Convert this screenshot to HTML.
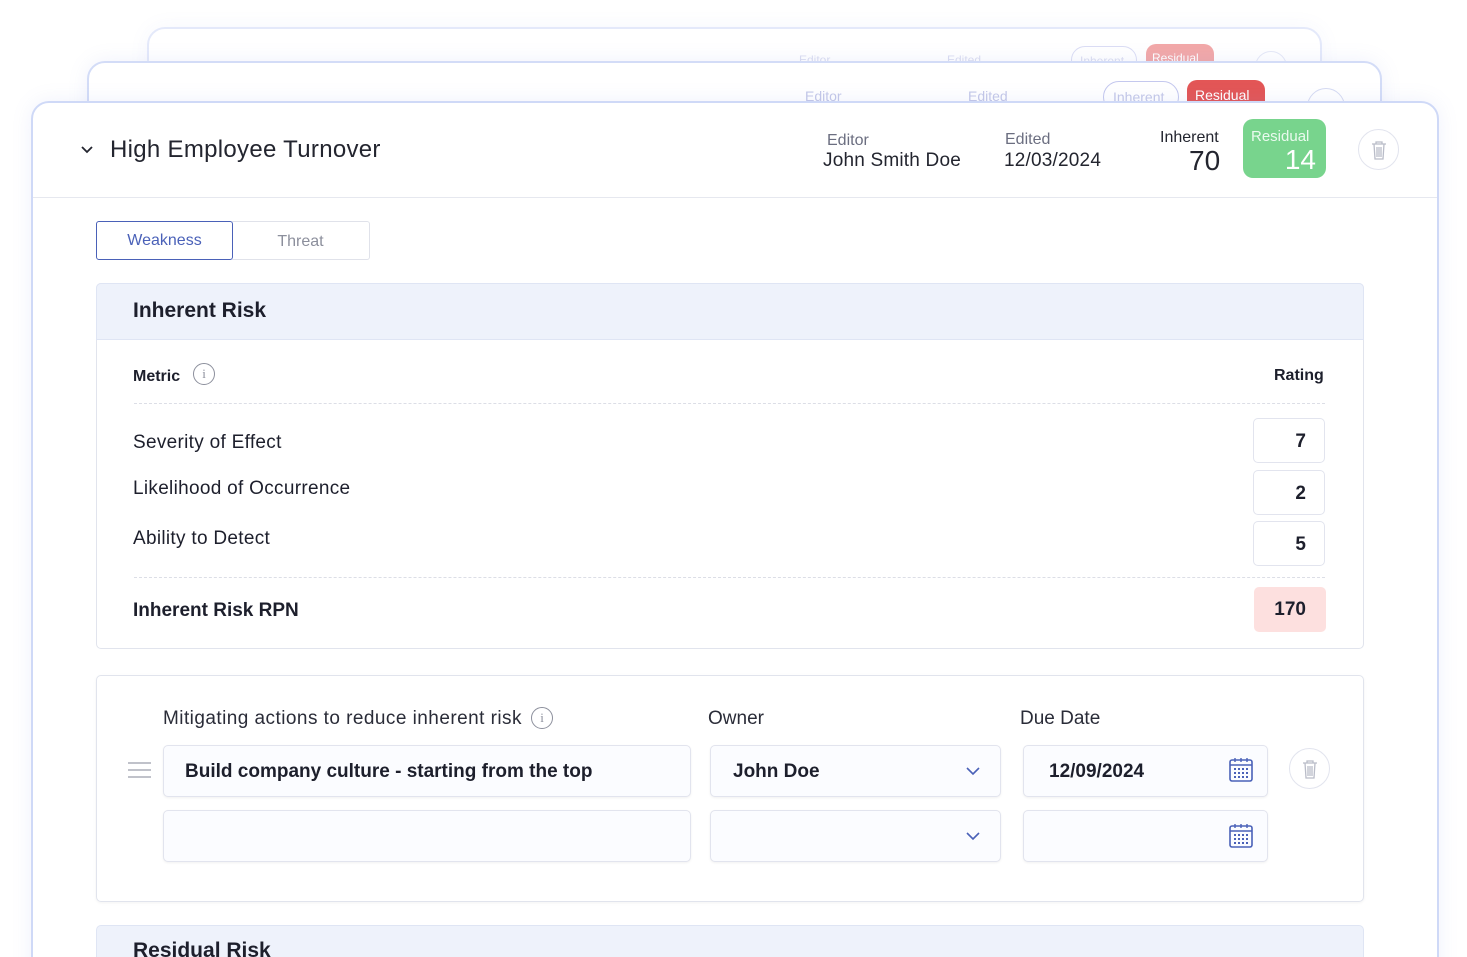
<!DOCTYPE html><html><head><style>
*{box-sizing:border-box;margin:0;padding:0}
html{width:1467px;height:957px;overflow:hidden}
body{width:1467px;height:957px;overflow:hidden;background:#fff;font-family:"Liberation Sans",sans-serif;color:#1d1f2c;position:relative}
.card{position:absolute;background:#fff;border:2px solid #d3dcf7;border-radius:18px;box-shadow:0 0 20px rgba(120,140,220,.12)}
.abs{position:absolute}
.lbl{color:#6b6e80;font-size:16px}
.val{font-size:19px;color:#23252f;letter-spacing:.2px}
.inp{position:absolute;border:1px solid #e2e4ee;border-radius:5px;background:#fbfcff;box-shadow:0 1px 2px rgba(0,0,0,.06);font-size:19px;font-weight:bold;display:flex;align-items:center}
.rate{position:absolute;left:1253px;width:72px;height:45px;border:1px solid #e2e4ee;border-radius:5px;text-align:right;padding-right:18px;line-height:45px;font-size:19px;font-weight:bold}
.dash{position:absolute;left:134px;width:1191px;border-top:1px dashed #dcdee6}
.trash{position:absolute;border:1px solid #e2e4ee;border-radius:50%;display:flex;align-items:center;justify-content:center}
</style></head><body>
<div class="card" style="left:147px;top:27px;width:1175px;height:120px;opacity:.6">
<div class="abs" style="left:650px;top:24px;font-size:12px;color:#c4c8e8">Editor</div>
<div class="abs" style="left:798px;top:24px;font-size:12px;color:#c4c8e8">Edited</div>
<div class="abs" style="left:922px;top:17px;width:66px;height:28px;border:1px solid #c4c8ee;border-radius:14px;font-size:12px;color:#c4c8e8;padding:7px 8px">Inherent</div>
<div class="abs" style="left:997px;top:15px;width:68px;height:40px;background:#ea6f6f;border-radius:10px;font-size:12px;color:#fff;padding:7px 6px">Residual</div>
<div class="abs" style="left:1106px;top:22px;width:32px;height:32px;border:1px solid #d6dbf2;border-radius:50%"></div>
</div>
<div class="card" style="left:87px;top:61px;width:1295px;height:100px">
<div class="abs" style="left:716px;top:25px;font-size:14px;color:#c4c8e8">Editor</div>
<div class="abs" style="left:879px;top:25px;font-size:14px;color:#c4c8e8">Edited</div>
<div class="abs" style="left:1014px;top:18px;width:76px;height:32px;border:1px solid #c4c8ee;border-radius:16px;font-size:14px;color:#c4c8e8;padding:7px 9px">Inherent</div>
<div class="abs" style="left:1098px;top:17px;width:78px;height:40px;background:#e35656;border-radius:10px;font-size:14px;color:#fff;padding:7px 8px">Residual</div>
<div class="abs" style="left:1218px;top:25px;width:38px;height:38px;border:1px solid #d6dbf2;border-radius:50%"></div>
</div>
<div class="card" style="left:31px;top:101px;width:1408px;height:900px;border-color:#cfd9f7">
<div class="abs" style="left:0;top:94px;width:1404px;border-top:1px solid #e6e8ef"></div>
</div>
<svg class="abs" style="left:80px;top:144px" width="14" height="12"><path d="M2 3l5 5 5-5" fill="none" stroke="#23252f" stroke-width="1.8"/></svg>
<div class="abs" style="left:110px;top:136px;font-size:24px;letter-spacing:.3px;color:#23252f">High Employee Turnover</div>
<div class="abs lbl" style="left:827px;top:132px">Editor</div>
<div class="abs val" style="left:823px;top:150px">John Smith Doe</div>
<div class="abs lbl" style="left:1005px;top:131px">Edited</div>
<div class="abs val" style="left:1004px;top:150px">12/03/2024</div>
<div class="abs" style="left:1160px;top:129px;font-size:16px;color:#23252f">Inherent</div>
<div class="abs" style="left:1189px;top:145px;font-size:28px;color:#23252f">70</div>
<div class="abs" style="left:1243px;top:119px;width:83px;height:59px;background:#78d48d;border-radius:10px;color:#fff">
<div class="abs" style="left:8px;top:9px;font-size:15px;color:#eafaee">Residual</div><div class="abs" style="right:10px;top:25px;font-size:28px">14</div></div>
<div class="trash" style="left:1358px;top:129px;width:41px;height:41px"><svg width="20" height="22"><path d="M3 5h14M7 5V3h6v2M5 5l1 15h8l1-15M8 8v10M10 8v10M12 8v10" fill="none" stroke="#b9bcc8" stroke-width="1.3"/></svg></div>

<div class="abs" style="left:96px;top:221px;width:137px;height:39px;border:1.5px solid #4a61b8;border-radius:3px;color:#4a61b8;font-size:16px;text-align:center;line-height:38px">Weakness</div>
<div class="abs" style="left:232px;top:221px;width:138px;height:39px;border:1px solid #e0e2ea;border-left:none;border-radius:0 3px 3px 0;color:#8c8f9c;font-size:16px;text-align:center;line-height:39px">Threat</div>

<div class="abs" style="left:96px;top:283px;width:1268px;height:366px;border:1px solid #e1e4ed;border-radius:5px"></div>
<div class="abs" style="left:96px;top:283px;width:1268px;height:57px;background:#eef2fb;border:1px solid #dfe5f4;border-radius:5px 5px 0 0"></div>
<div class="abs" style="left:133px;top:299px;font-size:21px;font-weight:bold">Inherent Risk</div>
<div class="abs" style="left:133px;top:368px;font-size:16px;font-weight:bold">Metric</div>
<div class="abs" style="left:193px;top:363px;width:22px;height:22px;border:1.3px solid #8c8f9c;border-radius:50%;font-size:13px;color:#8c8f9c;text-align:center;line-height:20px;font-family:'Liberation Serif',serif">i</div>
<div class="abs" style="left:1274px;top:367px;font-size:16px;font-weight:bold">Rating</div>
<div class="dash" style="top:403px"></div>
<div class="abs" style="left:133px;top:432px;font-size:19px;letter-spacing:.3px">Severity of Effect</div>
<div class="abs" style="left:133px;top:478px;font-size:19px;letter-spacing:.3px">Likelihood of Occurrence</div>
<div class="abs" style="left:133px;top:528px;font-size:19px;letter-spacing:.3px">Ability to Detect</div>
<div class="rate" style="top:418px">7</div>
<div class="rate" style="top:470px">2</div>
<div class="rate" style="top:521px">5</div>
<div class="dash" style="top:577px"></div>
<div class="abs" style="left:133px;top:600px;font-size:19px;font-weight:bold">Inherent Risk RPN</div>
<div class="abs" style="left:1254px;top:587px;width:72px;height:45px;background:#fde0df;border-radius:5px;text-align:right;padding-right:20px;line-height:45px;font-size:19px;font-weight:bold">170</div>

<div class="abs" style="left:96px;top:675px;width:1268px;height:227px;border:1px solid #e1e4ed;border-radius:5px;box-shadow:0 1px 3px rgba(0,0,0,.05)"></div>
<div class="abs" style="left:163px;top:708px;font-size:19px;letter-spacing:.45px;color:#2a2c38">Mitigating actions to reduce inherent risk</div>
<div class="abs" style="left:531px;top:707px;width:22px;height:22px;border:1.3px solid #8c8f9c;border-radius:50%;font-size:13px;color:#8c8f9c;text-align:center;line-height:20px;font-family:'Liberation Serif',serif">i</div>
<div class="abs" style="left:708px;top:708px;font-size:19px;color:#2a2c38">Owner</div>
<div class="abs" style="left:1020px;top:708px;font-size:19px;color:#2a2c38">Due Date</div>
<svg class="abs" style="left:128px;top:762px" width="24" height="16"><path d="M0 1h23M0 8h23M0 15h23" stroke="#9a9dab" stroke-width="1.3"/></svg>
<div class="inp" style="left:163px;top:745px;width:528px;height:52px;padding-left:21px;padding-top:2px">Build company culture - starting from the top</div>
<div class="inp" style="left:710px;top:745px;width:291px;height:52px;padding-left:22px;padding-top:2px">John Doe</div>
<div class="inp" style="left:1023px;top:745px;width:245px;height:52px;padding-left:25px;padding-top:2px">12/09/2024</div>
<div class="inp" style="left:163px;top:810px;width:528px;height:52px"></div>
<div class="inp" style="left:710px;top:810px;width:291px;height:52px"></div>
<div class="inp" style="left:1023px;top:810px;width:245px;height:52px"></div>
<svg class="abs" style="left:966px;top:766px" width="14" height="10"><path d="M1 2l6 6 6-6" fill="none" stroke="#4a61b8" stroke-width="1.6"/></svg>
<svg class="abs" style="left:966px;top:831px" width="14" height="10"><path d="M1 2l6 6 6-6" fill="none" stroke="#4a61b8" stroke-width="1.6"/></svg>
<svg class="abs" style="left:1229px;top:757px" width="25" height="26"><rect x="1" y="3" width="22" height="21" rx="2" fill="none" stroke="#4a61b8" stroke-width="1.6"/><path d="M1 8h22M6 1v4M12 1v4M18 1v4" stroke="#4a61b8" stroke-width="1.4"/><g fill="#4a61b8"><rect x="5" y="11" width="2" height="2"/><rect x="9" y="11" width="2" height="2"/><rect x="13" y="11" width="2" height="2"/><rect x="17" y="11" width="2" height="2"/><rect x="5" y="15" width="2" height="2"/><rect x="9" y="15" width="2" height="2"/><rect x="13" y="15" width="2" height="2"/><rect x="17" y="15" width="2" height="2"/><rect x="5" y="19" width="2" height="2"/><rect x="9" y="19" width="2" height="2"/><rect x="13" y="19" width="2" height="2"/><rect x="17" y="19" width="2" height="2"/></g></svg>
<svg class="abs" style="left:1229px;top:823px" width="25" height="26"><rect x="1" y="3" width="22" height="21" rx="2" fill="none" stroke="#4a61b8" stroke-width="1.6"/><path d="M1 8h22M6 1v4M12 1v4M18 1v4" stroke="#4a61b8" stroke-width="1.4"/><g fill="#4a61b8"><rect x="5" y="11" width="2" height="2"/><rect x="9" y="11" width="2" height="2"/><rect x="13" y="11" width="2" height="2"/><rect x="17" y="11" width="2" height="2"/><rect x="5" y="15" width="2" height="2"/><rect x="9" y="15" width="2" height="2"/><rect x="13" y="15" width="2" height="2"/><rect x="17" y="15" width="2" height="2"/><rect x="5" y="19" width="2" height="2"/><rect x="9" y="19" width="2" height="2"/><rect x="13" y="19" width="2" height="2"/><rect x="17" y="19" width="2" height="2"/></g></svg>
<div class="trash" style="left:1289px;top:748px;width:41px;height:41px"><svg width="20" height="22"><path d="M3 5h14M7 5V3h6v2M5 5l1 15h8l1-15M8 8v10M10 8v10M12 8v10" fill="none" stroke="#b9bcc8" stroke-width="1.3"/></svg></div>

<div class="abs" style="left:96px;top:925px;width:1268px;height:60px;background:#eef2fb;border:1px solid #dfe5f4;border-radius:5px"></div>
<div class="abs" style="left:133px;top:939px;font-size:21px;font-weight:bold">Residual Risk</div>
</body></html>
